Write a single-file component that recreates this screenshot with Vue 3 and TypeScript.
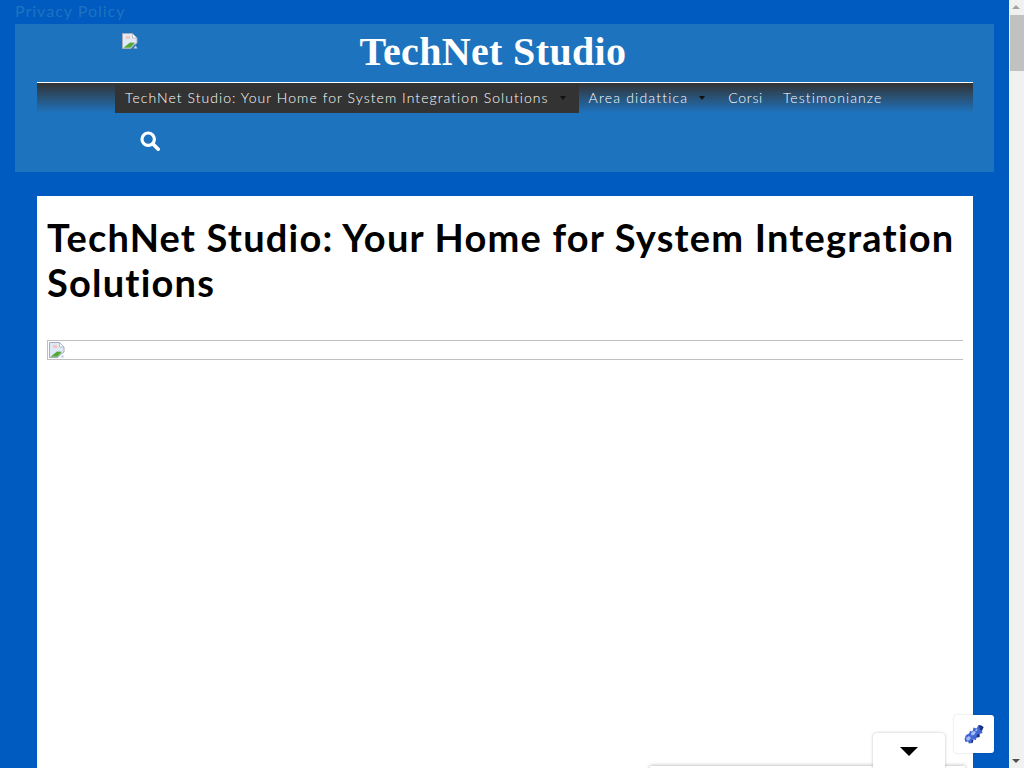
<script setup lang="ts">
interface NavItem {
  label: string
  active?: boolean
  caret?: boolean
}
const items: NavItem[] = [
  { label: 'TechNet Studio: Your Home for System Integration Solutions', active: true, caret: true },
  { label: 'Area didattica', caret: true },
  { label: 'Corsi' },
  { label: 'Testimonianze' },
]
</script>

<template>
  <div class="shell">
    <div class="page">
      <a class="privacy">Privacy Policy</a>
      <header class="header">
        <div class="brand">
          <svg class="broken logo" viewBox="0 0 16 16" aria-hidden="true">
            <path d="M0.5 0.5H10.5L15 5V10L12 12L9 15.500H0.5Z" fill="#dfe9f7" stroke="#a6adb8" stroke-width="1" />
            <path d="M10.500 0.5V5H15Z" fill="#fff" stroke="#a6adb8" stroke-width="0.8" />
            <path d="M1.500 14.800L8 9.500L13 9.800L8.500 14.800Z" fill="#57a83a" />
            <path d="M4 3H8V6H4Z" fill="#f3c7bd" />
            <path d="M13.500 12.500L15.500 15.500H11.500Z" fill="#c5d2e4" />
          </svg>
          <h2 class="site-title">TechNet Studio</h2>
        </div>
        <nav class="nav">
          <a v-for="item in items" :key="item.label" class="nav-item" :class="{ active: item.active }">
            {{ item.label }}<span v-if="item.caret" class="caret"></span>
          </a>
        </nav>
        <div class="search">
          <svg viewBox="0 0 20 20" class="search-icon" aria-hidden="true">
            <circle cx="8.2" cy="8.2" r="6.2" fill="none" stroke="#fff" stroke-width="3.2" />
            <path d="M12.8 12.8l5.4 5.4" stroke="#fff" stroke-width="3.6" stroke-linecap="round" />
          </svg>
        </div>
      </header>
      <main class="content">
        <h1 class="title">TechNet Studio: Your Home for System Integration Solutions</h1>
        <div class="image-frame">
          <svg class="broken" viewBox="0 0 16 16" aria-hidden="true">
            <path d="M0.5 0.5H10.5L15 5V10L12 12L9 15.500H0.5Z" fill="#dfe9f7" stroke="#a6adb8" stroke-width="1" />
            <path d="M10.500 0.5V5H15Z" fill="#fff" stroke="#a6adb8" stroke-width="0.8" />
            <path d="M1.500 14.800L8 9.500L13 9.800L8.500 14.800Z" fill="#57a83a" />
            <path d="M4 3H8V6H4Z" fill="#f3c7bd" />
            <path d="M13.500 12.500L15.500 15.500H11.500Z" fill="#c5d2e4" />
          </svg>
        </div>
      </main>
      <div class="float-bar"></div>
      <div class="float-tab"><span class="tab-arrow"></span></div>
      <div class="float-badge">
        <svg viewBox="0 0 20 20" class="badge-icon" aria-hidden="true">
          <path d="M0.500 15L2 11L5 9.500L6 7L8.500 7.500L9.500 3.500L12.500 4.500L14.500 1L17 1.500L19.500 3L18 6.500L18.500 9L15.500 10L15.500 13L12.500 13.500L12 16L9 15.500L8.500 19L5 19.500L4 17.500L1.500 18Z" fill="#4168d4" />
          <path d="M7 9L10 7L12 8L10 11L7.500 11.500ZM2 14L5 12L7 14L5 16.500L3 16.500ZM11.500 5.500L13.500 5L13 7L11.500 7Z" fill="#a9bcf0" />
          <path d="M14.500 1.500L17 1.500L19.500 3L18 6.500L16 6L15.500 3.500ZM13 10.500L15.500 10L15.500 13L12.500 13.500ZM8 16L9.500 16L8.500 19L7 18Z" fill="#1f2f7c" />
        </svg>
      </div>
    </div>
    <aside class="scrollbar">
      <span class="arrow up"></span>
      <span class="thumb"></span>
      <span class="arrow down"></span>
    </aside>
  </div>
</template>

<style>
html,
body {
  margin: 0;
  height: 100%;
  overflow: hidden;
}
</style>

<style scoped>
.shell {
  display: flex;
  height: 768px;
  overflow: hidden;
}
.page {
  position: relative;
  width: 1009px;
  flex: none;
  box-sizing: border-box;
  padding: 0 15px;
  background: #005bc1;
  overflow: hidden;
}
.privacy {
  display: block;
  height: 24px;
  font: 16px/22px "Lato", "Liberation Sans", sans-serif;
  letter-spacing: 1px;
  color: #1e73be;
}
.header {
  height: 148px;
  padding: 0 21px 0 22px;
  background: #1e73be;
  box-sizing: border-box;
}
.brand {
  position: relative;
  height: 58px;
  display: flex;
  justify-content: center;
  align-items: center;
  padding-right: 24px;
}
.logo {
  position: absolute;
  left: 85px;
  top: 9px;
}
.broken {
  display: block;
  width: 16px;
  height: 16px;
}
.site-title {
  margin: 0 0 2px;
  font: 700 40px/58px "Liberation Serif", serif;
  letter-spacing: 0.35px;
  color: #fff;
}
.nav {
  display: flex;
  height: 30px;
  padding-left: 78px;
  border-top: 1px solid #fff;
  background: linear-gradient(#333, #1e73be);
}
.nav-item {
  display: flex;
  align-items: center;
  padding: 0 10px;
  font: 300 14px/30px "Lato", "Liberation Sans", sans-serif;
  letter-spacing: 1.05px;
  color: #fff;
  white-space: nowrap;
}
.nav-item:nth-child(2) {
  letter-spacing: 1.2px;
}
.nav-item:nth-child(3) {
  letter-spacing: 0.7px;
}
.nav-item:nth-child(4) {
  letter-spacing: 1.1px;
}
.nav-item.active {
  background: #333;
}
.caret {
  margin-left: 11px;
  margin-right: 3px;
  width: 0;
  height: 0;
  border-left: 3px solid transparent;
  border-right: 3px solid transparent;
  border-top: 4px solid #111;
}
.search {
  padding: 18px 0 0 103px;
}
.search-icon {
  display: block;
  width: 20px;
  height: 20px;
}
.content {
  margin: 24px 21px 0 22px;
  padding: 19px 10px;
  height: 600px;
  background: #fff;
}
.title {
  margin: 0;
  font: 700 38px/45px "Lato", "Liberation Sans", sans-serif;
  letter-spacing: 1.2px;
  color: #000;
}
.image-frame {
  margin-top: 35px;
  padding: 1px 0 0 1px;
  height: 17px;
  border: 1px solid #c0c0c0;
  border-right: 0;
}
.float-bar {
  position: absolute;
  left: 650px;
  top: 766px;
  width: 315px;
  height: 10px;
  background: #fff;
  box-shadow: 0 0 4px rgba(0, 0, 0, 0.35);
}
.float-tab {
  position: absolute;
  left: 873px;
  top: 733px;
  width: 72px;
  height: 40px;
  background: #fff;
  border-radius: 4px;
  box-shadow: 0 0 3px rgba(0, 0, 0, 0.25);
  display: flex;
  justify-content: center;
  padding-top: 14px;
  box-sizing: border-box;
}
.tab-arrow {
  width: 0;
  height: 0;
  border-left: 9px solid transparent;
  border-right: 9px solid transparent;
  border-top: 9px solid #000;
}
.float-badge {
  position: absolute;
  left: 954px;
  top: 715px;
  width: 40px;
  height: 38px;
  background: #fff;
  border-radius: 3px;
  box-shadow: 0 0 2px rgba(0, 0, 0, 0.2);
  display: flex;
  align-items: center;
  justify-content: center;
}
.badge-icon {
  width: 20px;
  height: 20px;
}
.scrollbar {
  flex: none;
  width: 15px;
  height: 768px;
  box-sizing: border-box;
  background: #f1f1f1;
  position: relative;
}
.thumb {
  position: absolute;
  left: 1px;
  right: 0;
  top: 15px;
  height: 56px;
  background: #c1c1c1;
}
.arrow {
  position: absolute;
  left: 3px;
  width: 0;
  height: 0;
  border-left: 4px solid transparent;
  border-right: 4px solid transparent;
}
.arrow.up {
  top: 5px;
  border-bottom: 4px solid #a3a3a3;
}
.arrow.down {
  bottom: 5px;
  border-top: 4px solid #505050;
}
</style>
